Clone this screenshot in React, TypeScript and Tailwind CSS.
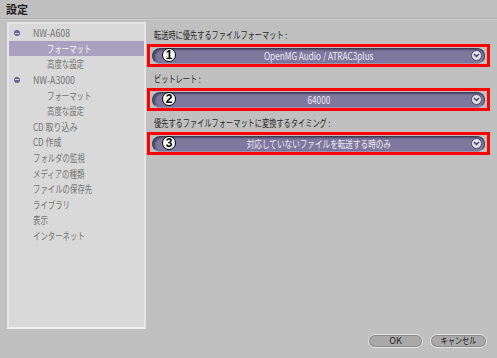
import React from "react";

const font = { fontFamily: '"Noto Sans CJK JP", "Liberation Sans", sans-serif' };

function Chevron() {
  return (
    <div className="w-[11px] h-[11px] rounded-full bg-[#e4e2ec] border border-[#4a4660] flex items-center justify-center">
      <svg width="7" height="5" viewBox="0 0 7 5">
        <path d="M1 1 L3.5 3.5 L6 1" stroke="#3a3650" strokeWidth="1.3" fill="none" />
      </svg>
    </div>
  );
}

function Field({ label, value, num, valueClass }: { label: string; value: string; num: string; valueClass: string }) {
  return (
    <div className="flex flex-col">
      <div className="h-[16px] pl-[7px] text-[10px] leading-[16px] text-[#2a2a2a] whitespace-nowrap">
        <span className="inline-block origin-left scale-x-[0.72]">{label}</span>
      </div>
      <div className="relative w-[343px] h-[23px] border-[3px] border-[#ff0000] mt-[1px] flex items-center px-[2px]">
        <div className="flex-1 h-[16px] rounded-full bg-[#7f789e] border border-[#3e3a52] border-b-[#9a95b2] flex items-center shadow-[inset_2px_1px_2px_rgba(40,36,60,0.6)]">
          <div className="flex-1 text-center text-[10px] leading-[14px] text-[#eceaf4] pl-[14px] whitespace-nowrap">
            <span className={valueClass}>{value}</span>
          </div>
          <div className="pr-[2px]"><Chevron /></div>
        </div>
        <div className="absolute left-[12px] top-[1px] w-[14px] h-[14px] rounded-full bg-white border border-black flex items-center justify-center text-[12px] font-bold leading-none text-black" style={{ fontFamily: '"Liberation Sans", sans-serif' }}>
          {num}
        </div>
      </div>
    </div>
  );
}

const items: { text: string; indent: number; bullet?: boolean; selected?: boolean; cls: string }[] = [
  { text: "NW-A608", indent: 24, bullet: true, cls: "inline-block origin-left scale-x-[0.88]" },
  { text: "フォーマット", indent: 38, selected: true, cls: "inline-block origin-left scale-x-[0.74]" },
  { text: "高度な設定", indent: 38, cls: "inline-block origin-left scale-x-[0.74]" },
  { text: "NW-A3000", indent: 24, bullet: true, cls: "inline-block origin-left scale-x-[0.88]" },
  { text: "フォーマット", indent: 38, cls: "inline-block origin-left scale-x-[0.74]" },
  { text: "高度な設定", indent: 38, cls: "inline-block origin-left scale-x-[0.74]" },
  { text: "CD 取り込み", indent: 24, cls: "inline-block origin-left scale-x-[0.8]" },
  { text: "CD 作成", indent: 24, cls: "inline-block origin-left scale-x-[0.8]" },
  { text: "フォルダの監視", indent: 24, cls: "inline-block origin-left scale-x-[0.74]" },
  { text: "メディアの種類", indent: 24, cls: "inline-block origin-left scale-x-[0.74]" },
  { text: "ファイルの保存先", indent: 24, cls: "inline-block origin-left scale-x-[0.74]" },
  { text: "ライブラリ", indent: 24, cls: "inline-block origin-left scale-x-[0.74]" },
  { text: "表示", indent: 24, cls: "inline-block origin-left scale-x-[0.74]" },
  { text: "インターネット", indent: 24, cls: "inline-block origin-left scale-x-[0.74]" },
];

export default function App() {
  return (
    <div className="w-[497px] h-[358px] bg-[#c0c0c0] overflow-hidden flex flex-col" style={font}>
      <div className="h-[19px] flex items-center px-[6px] border-b border-[#b0b0b0] shadow-[0_1px_0_#cfcfcf]">
        <span className="text-[11px] font-bold text-[#1a1a1a] leading-none">設定</span>
      </div>
      <div className="flex pt-[3px] pl-[7px]">
        <div className="w-[139px] h-[307px] bg-[#d9d9d9] border-2 border-[#e6e6e6] border-b-[#eeeeee] pt-[1px] flex flex-col">
          {items.map((it, i) => (
            <div
              key={i}
              className={`relative h-[15.6px] flex items-center text-[10px] whitespace-nowrap ${it.selected ? "bg-[#a8a2c0] text-[#f4f4f8]" : "text-[#747474]"}`}
              style={{ paddingLeft: it.indent }}
            >
              {it.bullet && (
                <div className="absolute left-[5px] top-[5px] w-[6px] h-[6px] rounded-full bg-[#6a6494] flex items-center justify-center">
                  <div className="w-[4px] h-[1px] bg-[#d0cce0]" />
                </div>
              )}
              <span className={it.cls}>{it.text}</span>
            </div>
          ))}
        </div>
        <div className="ml-[1px] flex flex-col gap-[4px] pt-[5px]">
          <Field label="転送時に優先するファイルフォーマット :" value="OpenMG Audio / ATRAC3plus" num="1" valueClass="inline-block origin-center scale-x-[0.82]" />
          <Field label="ビットレート :" value="64000" num="2" valueClass="inline-block origin-center scale-x-[0.82]" />
          <Field label="優先するファイルフォーマットに変換するタイミング :" value="対応していないファイルを転送する時のみ" num="3" valueClass="inline-block origin-center scale-x-[0.76]" />
        </div>
      </div>
      <div className="flex justify-end gap-[7px] pr-[10px] mt-[5px]">
        <div className="w-[55px] h-[14px] rounded-full bg-[#a9a9a9] border border-[#e4e4e4] shadow-[inset_0_0_0_1px_#8a8a8a] flex items-center justify-center text-[9px] text-[#222]">OK</div>
        <div className="w-[57px] h-[14px] rounded-full bg-[#a9a9a9] border border-[#e4e4e4] shadow-[inset_0_0_0_1px_#8a8a8a] flex items-center justify-center text-[9px] text-[#222]">
          <span className="inline-block scale-x-[0.8]">キャンセル</span>
        </div>
      </div>
    </div>
  );
}
